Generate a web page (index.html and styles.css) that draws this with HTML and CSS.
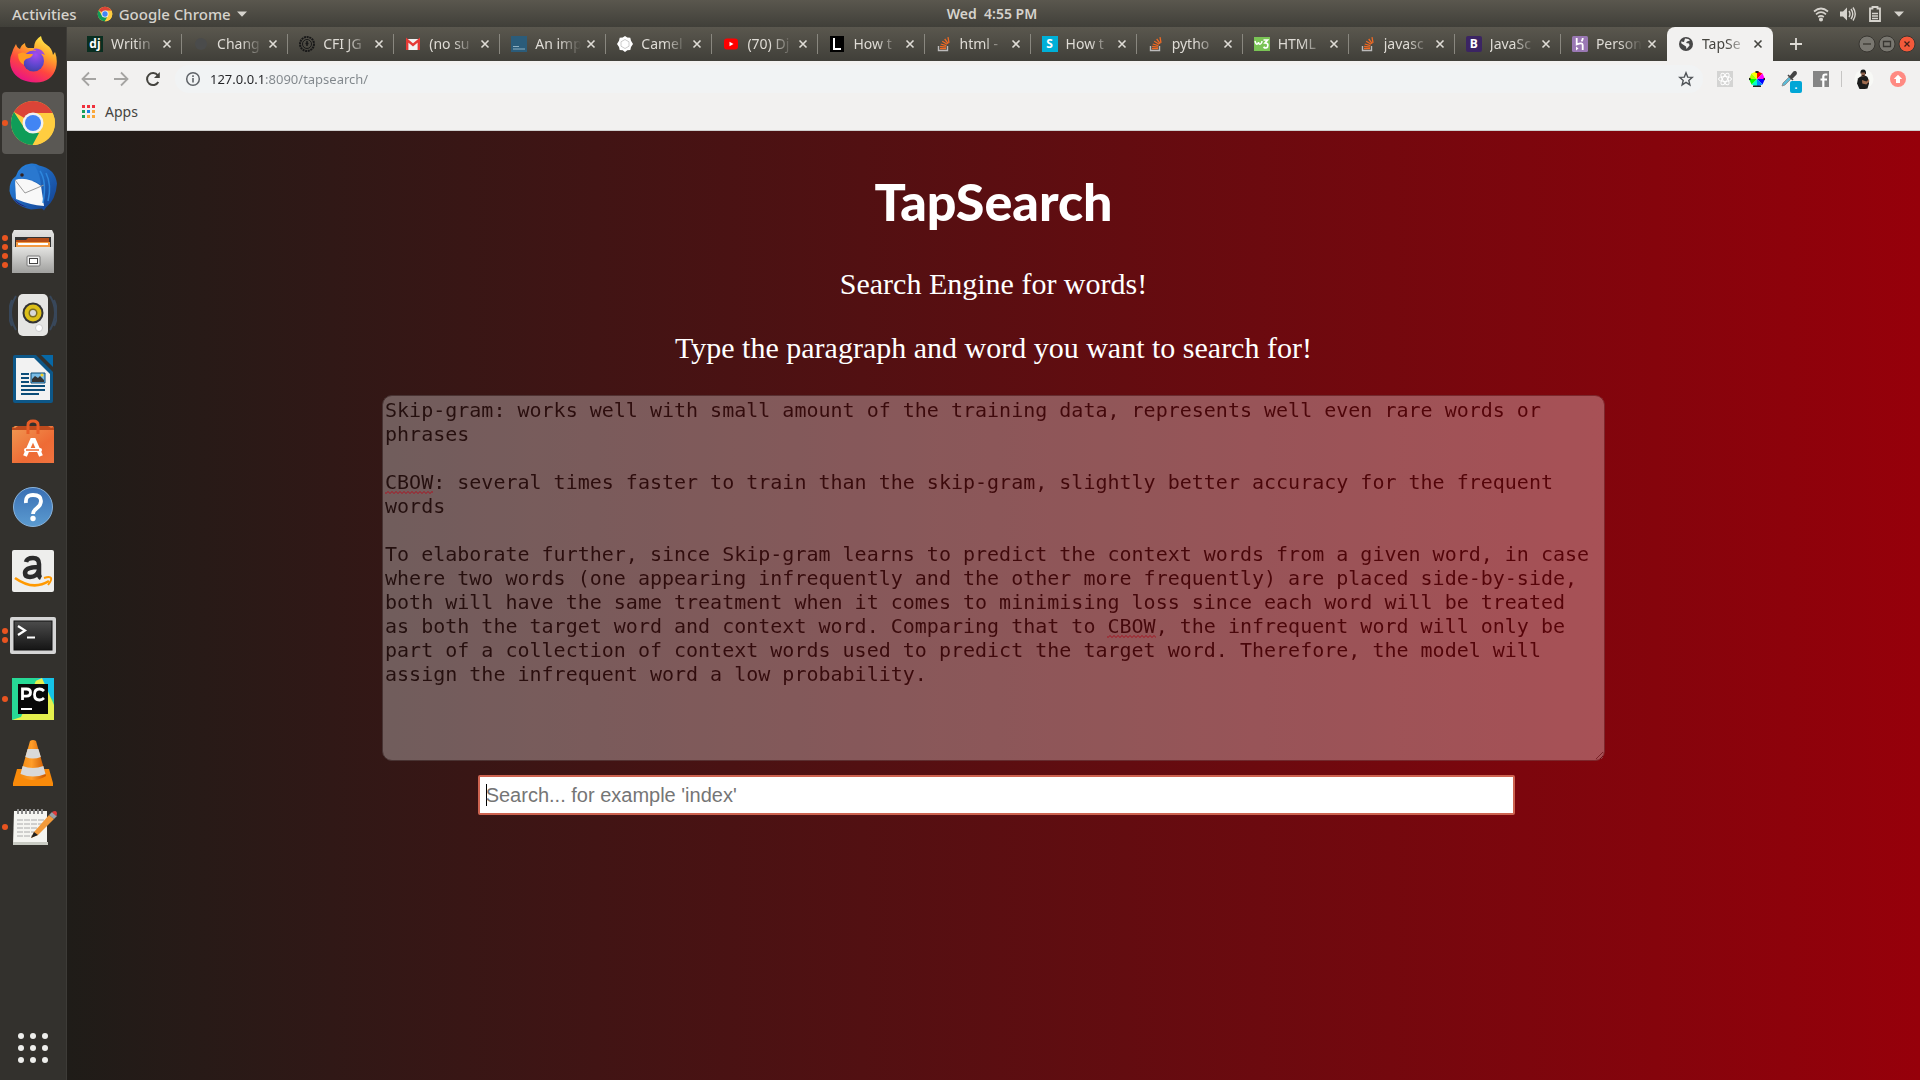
FILE: index.html
```html
<!DOCTYPE html>
<html lang="en">
<head>
<meta charset="utf-8">
<title>TapSearch</title>
<link rel="stylesheet" href="styles.css">
</head>
<body>
<svg class="defs" aria-hidden="true">
  <defs>
    <linearGradient id="ffBody" x1="0.8" y1="0" x2="0.3" y2="1"><stop offset="0" stop-color="#fff44f"/><stop offset=".35" stop-color="#ffa52b"/><stop offset=".65" stop-color="#ff4540"/><stop offset="1" stop-color="#e8108a"/></linearGradient>
    <radialGradient id="ffCore" cx=".6" cy=".2" r=".9"><stop offset="0" stop-color="#a44cf0"/><stop offset=".6" stop-color="#5b46cc"/><stop offset="1" stop-color="#3a3f9c"/></radialGradient>
    <linearGradient id="bird" x1="0" y1="0" x2="1" y2="1"><stop offset="0" stop-color="#2a8be8"/><stop offset="1" stop-color="#123d8c"/></linearGradient>
    <linearGradient id="metal" x1="0" y1="0" x2="0" y2="1"><stop offset="0" stop-color="#e4e4e2"/><stop offset="1" stop-color="#a2a2a0"/></linearGradient>
    <linearGradient id="helpBlue" x1="0" y1="0" x2="0" y2="1"><stop offset="0" stop-color="#3a6fb4"/><stop offset="1" stop-color="#5b9bd0"/></linearGradient>
    <linearGradient id="bag" x1="0" y1="0" x2="1" y2="1"><stop offset="0" stop-color="#f0944f"/><stop offset=".6" stop-color="#ee6b35"/><stop offset="1" stop-color="#f0733f"/></linearGradient>
    <linearGradient id="term" x1="0" y1="0" x2="0" y2="1"><stop offset="0" stop-color="#4c4c4c"/><stop offset="1" stop-color="#151515"/></linearGradient>
    <linearGradient id="cone" x1="0" y1="0" x2="1" y2="0"><stop offset="0" stop-color="#f08a10"/><stop offset=".45" stop-color="#ff9d2a"/><stop offset="1" stop-color="#c85500"/></linearGradient>
    <linearGradient id="pyc" x1="0" y1="0" x2="1" y2="0"><stop offset="0" stop-color="#21d789"/><stop offset="1" stop-color="#2fd6a0"/></linearGradient>
    <symbol id="chrome" viewBox="0 0 48 48">
      <circle cx="24" cy="24" r="22" fill="#ffcd40"/>
      <path d="M24 24 4.95 13A22 22 0 0 1 43.05 13L43.5 14H24Z" fill="#db4437"/>
      <path d="M4.95 13 15.3 29A10 10 0 0 0 24 34h8.6L24 46A22 22 0 0 1 4.95 13Z" fill="#0f9d58"/>
      <path d="M32.7 29 23.5 46A22 22 0 0 0 43.5 14H24Z" fill="#ffcd40"/>
      <circle cx="24" cy="24" r="10.5" fill="#f1f1f1"/><circle cx="24" cy="24" r="8" fill="#4285f4"/>
    </symbol>
    <symbol id="so" viewBox="0 0 16 16"><path d="M2.500 10v4.500h9V10" fill="none" stroke="#bcbbbb" stroke-width="1.400"/><path d="M4 12.700h6M4.100 10.500l6 .6M4.700 8l5.700 1.700M6.200 5.200l5 3M8.700 3l3.500 4.600M12 1.200l1 5.700" stroke="#f06a24" stroke-width="1.300"/></symbol>
    <symbol id="x" viewBox="0 0 10 10"><path d="M1.500 1.500l7 7M8.500 1.500l-7 7" stroke="currentColor" stroke-width="1.600"/></symbol>
  </defs>
</svg>

<header class="topbar">
  <div class="topbar-side">
    <button class="topbar-item">Activities</button>
    <button class="topbar-item app-menu"><svg class="i16"><use href="#chrome"/></svg>Google Chrome<svg class="i10" viewBox="0 0 10 6"><path d="M0 .5h10L5 5.800z" fill="currentColor"/></svg></button>
  </div>
  <button class="topbar-item clock">Wed&nbsp; 4:55 PM</button>
  <div class="topbar-side status">
    <svg class="i16" viewBox="0 0 16 16" fill="none" stroke="currentColor" stroke-width="1.700"><path d="M1 5.500q7-6 14 0M3 8.300q5-4.200 10 0M5.200 11q2.800-2.400 5.600 0"/><circle cx="8" cy="13.500" r="1.200" fill="currentColor"/></svg>
    <svg class="i16" viewBox="0 0 16 16"><path d="M0 5.500h3l4-4v13l-4-4H0z" fill="currentColor"/><path d="M9 5q2 3 0 6M11 3q3.500 5 0 10M13 1.500q4.500 6.500 0 13" fill="none" stroke="currentColor" stroke-width="1.400"/></svg>
    <svg class="i16" viewBox="0 0 16 16"><path d="M3 2.500h2.500V1h5v1.500H13V15H3z" fill="none" stroke="currentColor" stroke-width="1.800"/><path d="M5 7.500h6M5 10h6M5 12.500h6" stroke="currentColor" stroke-width="1.500"/></svg>
    <svg class="i10" viewBox="0 0 10 6"><path d="M0 .5h10L5 5.800z" fill="currentColor"/></svg>
  </div>
</header>

<div class="desktop">
<nav class="dock" aria-label="Dock">
  <button class="dock-item" aria-label="Firefox"><svg viewBox="0 0 48 48"><path d="M3 18Q4 14 7 9q1 4 4 5 1-4 5-6 0 4 3 5h6q0-8 7-12 1 6 6 9 5 3 6 10l2-3q3 8 1 16-4 14-20 14.500Q9 47 3 35-1 26 3 18Z" fill="url(#ffBody)"/><circle cx="24.500" cy="26" r="10.500" fill="url(#ffCore)"/><path d="M9 19q5-3 9 0h6q-1 4-7 5-3 2-2 6Q9 27 9 19Z" fill="#ff9b22"/><path d="M24 14q8-2 12 6-4-2-6-1-3-4-6-5Z" fill="#9b4be0"/></svg></button>
  <button class="dock-item active" aria-label="Google Chrome"><span class="dots"><i></i></span><svg><use href="#chrome"/></svg></button>
  <button class="dock-item" aria-label="Thunderbird"><svg viewBox="0 0 48 48"><path d="M7 13Q10 2 22 .5q5-.5 8 2 16 3 18 18-1 16-11 24l-2 3-2-2-11 1Q3 42 .5 28 0 18 7 13Z" fill="url(#bird)"/><path d="M6 17q12-4 26 6l3 20q-14-1-28-7Z" fill="#f8f8f8"/><path d="M6 17l10 13 19-8" fill="none" stroke="#9a9a9a"/><path d="M10 11q4-9 16-8 5 8 6 19-12-9-24-6Z" fill="#2a78cf"/><path d="M31 8q7 10 3 32M37 10q6 12 2 28" stroke="#2d86dd" fill="none" stroke-width="1.500"/><circle cx="13" cy="12" r="1.800" fill="#322"/><path d="M3 34q6 7 15 10-9-1-15-10Z" fill="#2b1260"/></svg></button>
  <button class="dock-item" aria-label="Files"><span class="dots"><i></i><i></i><i></i><i></i></span><svg viewBox="0 0 48 48"><path d="M5 3h38l2 4v39H3V7Z" fill="url(#metal)"/><path d="M6 10h36v12H6z" fill="#333"/><path d="M7 13h10l2-2h21v10H7z" fill="#b64d16"/><path d="M7 15h34v7H7z" fill="#f39a43"/><path d="M9 16h30v2H9z" fill="#fff"/><path d="M4 20h40v25H4z" fill="url(#metal)"/><rect x="18" y="29" width="13" height="10" rx="1" fill="#eee" stroke="#777"/><rect x="20.500" y="31.500" width="8" height="5" fill="#fff" stroke="#444"/></svg></button>
  <button class="dock-item" aria-label="Rhythmbox"><svg viewBox="0 0 48 48"><path d="M7 5q-10 16 0 34M3 9q-6 14 0 26M41 5q10 16 0 34M45 9q6 14 0 26" fill="none" stroke="#3d5a80" stroke-width="2" opacity=".55"/><rect x="9" y="3" width="30" height="42" rx="5" fill="#e5e5e3"/><circle cx="24" cy="22" r="10.500" fill="#333"/><circle cx="24" cy="22" r="8.500" fill="#dcbf18"/><circle cx="24" cy="22" r="4.500" fill="#7c6d25"/><circle cx="24" cy="22" r="3" fill="#d8d8d8"/><circle cx="30" cy="37" r="3.500" fill="#fff" stroke="#ccc"/></svg></button>
  <button class="dock-item" aria-label="LibreOffice Writer"><svg viewBox="0 0 48 48"><path d="M4 2q0-2 2-2h21l17 17v29q0 2-2 2H6q-2 0-2-2z" fill="#0d5788"/><path d="M32 0h12v12Z" fill="#0768a6"/><path d="M7 3h18l16 16v26H7z" fill="#f2f2f2"/><path d="M12 19h8M12 23h8M12 27h8M12 31h24M12 35h24M12 39h18" stroke="#0b4d79" stroke-width="2"/><path d="M22 18h14v10H22z" fill="#79bce6" stroke="#0b4d79"/><path d="M23 27v-3l3-3 3 2 2-2 4 4v2z" fill="#333"/><circle cx="33" cy="20" r="1.500" fill="#f5d021"/></svg></button>
  <button class="dock-item" aria-label="Ubuntu Software"><svg viewBox="0 0 48 48"><path d="M3 9l3-2 38 0 1 2v35H3z" fill="url(#bag)"/><path d="M3 11V8l3 1 3-2h30l3 2 3-1v3z" fill="#bd4a1d"/><path d="M3 11h42v33H3z" fill="url(#bag)"/><path d="M19 15V6q0-4 5-4t5 4v9" fill="none" stroke="#e85d27" stroke-width="3"/><path d="M16 37l7-16h2l7 16" fill="none" stroke="#fff" stroke-width="4"/><rect x="15" y="29" width="18" height="4" rx="2" fill="#fff"/><path d="M17 31h13" stroke="#ee6b35" stroke-width="1.500"/></svg></button>
  <button class="dock-item" aria-label="Help"><svg viewBox="0 0 48 48"><circle cx="24" cy="24" r="19.500" fill="url(#helpBlue)" stroke="#8ab4dc"/><path d="M17 20q-1-8 7-8 8 0 8 6 0 4-4 7t-4 6" fill="none" stroke="#fff" stroke-width="3.800"/><circle cx="24" cy="35.500" r="2.700" fill="#fff"/></svg></button>
  <button class="dock-item" aria-label="Amazon"><svg viewBox="0 0 48 48"><rect x="3" y="3" width="42" height="42" rx="2" fill="#eeeeec"/><path d="M17 15q1-4 7-4 6 0 6 6v10q0 3 2 4M30 20q-14 0-14 6 0 4 5 4 7 0 9-7" fill="none" stroke="#2b2b2b" stroke-width="4.500"/><path d="M6 31q18 13 34 3" fill="none" stroke="#f90" stroke-width="2.600"/><path d="M35 31q6-2 7 0t-3 7" fill="none" stroke="#f90" stroke-width="2"/></svg></button>
  <button class="dock-item" aria-label="Terminal"><span class="dots"><i></i><i></i></span><svg viewBox="0 0 48 48"><rect x="1" y="6" width="46" height="37" rx="2" fill="#d5d5d5"/><rect x="5" y="10" width="38" height="29" fill="url(#term)" stroke="#111"/><path d="M9 15l7 4.500L9 24M18 26.500h8" fill="none" stroke="#fff" stroke-width="2.200"/></svg></button>
  <button class="dock-item" aria-label="PyCharm"><span class="dots"><i></i></span><svg viewBox="0 0 48 48"><path d="M3 3h42v42H3z" fill="url(#pyc)"/><path d="M24 9l6-6h15v22z" fill="#15c4e8"/><path d="M22 8l11-5 12 27v15H3z" fill="#e5f04d"/><path d="M3 3h25L12 42l-9 3z" fill="#27d996"/><path d="M9 9h30v30H9z" fill="#080808"/><path d="M13.500 25V14h4q4 0 4 3.600t-4 3.600h-4M35 16q-2-2-4.500-2-5 0-5 5.500t5 5.500Q33 25 35 23" fill="none" stroke="#fff" stroke-width="2.800"/><path d="M12 34h11" stroke="#fff" stroke-width="2"/></svg></button>
  <button class="dock-item" aria-label="VLC"><svg viewBox="0 0 48 48"><path d="M8 30h32l4 14v3H4v-3z" fill="#f98a0a"/><path d="M21 2q3-2 6 0l10 35q-13 8-26 0z" fill="url(#cone)"/><path d="M18.600 10h10.800l2.500 8q-8 3-15.600 0zM13.600 27q10 4 20.800 0l2.100 8q-12.500 5-25 0z" fill="#d9d9d9"/></svg></button>
  <button class="dock-item" aria-label="Text Editor"><span class="dots"><i></i></span><svg viewBox="0 0 48 48"><path d="M5 8h33v34H4z" fill="#f5f5f1"/><path d="M4 39h35v3H4z" fill="#c9cbc3"/><path d="M8 17h27M8 21h26M8 25h20M8 29h22M8 33h16" stroke="#aaa" stroke-dasharray="6 1"/><path d="M9 6v5M13 6v5M17 6v5M21 6v5M25 6v5M29 6v5M33 6v5" stroke="#888" stroke-width="2"/><path d="M25 29l15-17 5 4-16 16-7 3z" fill="#f29a3a"/><path d="M40 12l3-3 5 4-3 3z" fill="#9aa0a6"/><path d="M43 9q5-3 5 2l-1 2z" fill="#e23b3b"/><path d="M25 29l4 3-7 3z" fill="#222"/></svg></button>
  <button class="dock-item apps-grid" aria-label="Show Applications"><svg viewBox="0 0 48 48" fill="#eeeeec"><circle cx="12" cy="12" r="3"/><circle cx="24" cy="12" r="3"/><circle cx="36" cy="12" r="3"/><circle cx="12" cy="24" r="3"/><circle cx="24" cy="24" r="3"/><circle cx="36" cy="24" r="3"/><circle cx="12" cy="36" r="3"/><circle cx="24" cy="36" r="3"/><circle cx="36" cy="36" r="3"/></svg></button>
</nav>

<div class="browser">
  <div class="tabstrip">
    <div class="tabs">
      <div class="tab"><span class="fav fav-dj">dj</span><span class="tab-title">Writin</span><button class="close" aria-label="Close"><svg><use href="#x"/></svg></button></div>
      <div class="tab"><svg class="fav" viewBox="0 0 16 16"><circle cx="8" cy="8" r="6" fill="#4a4b4b"/></svg><span class="tab-title">Chang</span><button class="close" aria-label="Close"><svg><use href="#x"/></svg></button></div>
      <div class="tab"><svg class="fav" viewBox="0 0 16 16" fill="none" stroke="#181818"><circle cx="8" cy="8" r="7" stroke-width="2" stroke-dasharray="2 .7"/><circle cx="8" cy="8" r="4.500"/><path d="M8 5v5M6.500 7.500h3" stroke-width="1.500"/></svg><span class="tab-title">CFI JG</span><button class="close" aria-label="Close"><svg><use href="#x"/></svg></button></div>
      <div class="tab"><svg class="fav" viewBox="0 0 16 16"><path d="M1 3h14v11H1z" fill="#f2f2f2"/><path d="M2.200 14V4L8 9l5.800-5v10" fill="none" stroke="#e53935" stroke-width="2.400"/></svg><span class="tab-title">(no su</span><button class="close" aria-label="Close"><svg><use href="#x"/></svg></button></div>
      <div class="tab"><svg class="fav" viewBox="0 0 16 16"><path d="M0 0h16v16H0z" fill="#2b5c7a"/><path d="M2 10.500h6M2 13h12" stroke="#8fb0c2"/></svg><span class="tab-title">An imp</span><button class="close" aria-label="Close"><svg><use href="#x"/></svg></button></div>
      <div class="tab"><svg class="fav" viewBox="0 0 16 16"><path d="M8 0l2.300 1.500 3 .3.700 3L16 8l-2 3-.7 3-3 .3L8 16l-2.300-1.700-3-.3L2 11 0 8l2-3.200.7-3 3-.3z" fill="#fff"/><path d="M8 3.500l4 2.300v4.400l-4 2.300-4-2.300V5.800z" fill="none" stroke="#ccc"/></svg><span class="tab-title">Camel</span><button class="close" aria-label="Close"><svg><use href="#x"/></svg></button></div>
      <div class="tab"><svg class="fav" viewBox="0 0 16 16"><rect x="1" y="2.500" width="14" height="11" rx="3" fill="#f00"/><path d="M6.500 5.700v4.600L10.500 8z" fill="#fff"/></svg><span class="tab-title">(70) Dj</span><button class="close" aria-label="Close"><svg><use href="#x"/></svg></button></div>
      <div class="tab"><svg class="fav" viewBox="0 0 16 16"><path d="M1 0h14v16H1z"/><path d="M5 2v11h7" fill="none" stroke="#fff" stroke-width="2"/></svg><span class="tab-title">How t</span><button class="close" aria-label="Close"><svg><use href="#x"/></svg></button></div>
      <div class="tab"><svg class="fav"><use href="#so"/></svg><span class="tab-title">html -</span><button class="close" aria-label="Close"><svg><use href="#x"/></svg></button></div>
      <div class="tab"><span class="fav fav-s">S</span><span class="tab-title">How t</span><button class="close" aria-label="Close"><svg><use href="#x"/></svg></button></div>
      <div class="tab"><svg class="fav"><use href="#so"/></svg><span class="tab-title">pytho</span><button class="close" aria-label="Close"><svg><use href="#x"/></svg></button></div>
      <div class="tab"><svg class="fav" viewBox="0 0 16 16"><path d="M0 1h16v14H0z" fill="#7ac455"/><path d="M1 5q1 4 2.500 3 1-1 1-2 .5 3 2 2t1.500-3" fill="none" stroke="#fff" stroke-width="1.500"/><path d="M9.500 4h4l-2.500 3q4 0 2.500 4-1.500 2-4 0" fill="none" stroke="#fff" stroke-width="1.700"/></svg><span class="tab-title">HTML</span><button class="close" aria-label="Close"><svg><use href="#x"/></svg></button></div>
      <div class="tab"><svg class="fav"><use href="#so"/></svg><span class="tab-title">javasc</span><button class="close" aria-label="Close"><svg><use href="#x"/></svg></button></div>
      <div class="tab"><span class="fav fav-b">B</span><span class="tab-title">JavaSc</span><button class="close" aria-label="Close"><svg><use href="#x"/></svg></button></div>
      <div class="tab"><svg class="fav" viewBox="0 0 16 16"><rect width="16" height="16" rx="1.500" fill="#9a78b4"/><path d="M4.700 2v6.500q6-2.500 6 .5v5M10.800 2q0 2-1.300 3.300" fill="none" stroke="#fff" stroke-width="1.800"/><path d="M4 10.500L6.500 12.500 4 14.500z" fill="#fff"/></svg><span class="tab-title">Person</span><button class="close" aria-label="Close"><svg><use href="#x"/></svg></button></div>
      <div class="tab current"><svg class="fav" viewBox="0 0 16 16"><circle cx="8" cy="8" r="7" fill="#474747"/><path d="M7 2.500q4 0 5 2l-3 1-1 1.500 3 .5.500 2L8.500 13 8 10.500l-4.500-3L3 5.500l3 .5z" fill="#f2f1f0"/></svg><span class="tab-title">TapSe</span><button class="close" aria-label="Close"><svg><use href="#x"/></svg></button></div>
    </div>
    <button class="new-tab" aria-label="New tab"><svg viewBox="0 0 12 12"><path d="M6 0v12M0 6h12" stroke="currentColor" stroke-width="1.800"/></svg></button>
    <div class="window-buttons">
      <button aria-label="Minimize"><svg viewBox="0 0 18 18"><circle cx="9" cy="9" r="8" fill="#797770" stroke="#383631"/><path d="M5 9h8" stroke="#383631" stroke-width="1.300"/></svg></button>
      <button aria-label="Maximize"><svg viewBox="0 0 18 18"><circle cx="9" cy="9" r="8" fill="#797770" stroke="#383631"/><path d="M5.500 6.500h7v5h-7z" fill="none" stroke="#383631" stroke-width="1.300"/></svg></button>
      <button aria-label="Close window"><svg viewBox="0 0 18 18"><circle cx="9" cy="9" r="8" fill="#f4593a" stroke="#383631"/><path d="M6.500 6.500l5 5M11.500 6.500l-5 5" stroke="#45201a" stroke-width="1.300"/></svg></button>
    </div>
  </div>

  <div class="toolbar">
    <button class="nav-btn off" aria-label="Back"><svg class="i16" viewBox="0 0 16 16"><path d="M15 8H2M8 1.500L1.500 8 8 14.500" fill="none" stroke="currentColor" stroke-width="1.800"/></svg></button>
    <button class="nav-btn off" aria-label="Forward"><svg class="i16" viewBox="0 0 16 16"><path d="M1 8h13M8 1.500L14.500 8 8 14.500" fill="none" stroke="currentColor" stroke-width="1.800"/></svg></button>
    <button class="nav-btn" aria-label="Reload"><svg class="i16" viewBox="0 0 16 16"><path d="M13.300 11A6 6 0 1 1 12.800 4.400" fill="none" stroke="currentColor" stroke-width="2"/><path d="M14.800 1v6H9z" fill="currentColor"/></svg></button>
    <div class="omnibox">
      <svg class="i16" viewBox="0 0 16 16"><circle cx="8" cy="8" r="6.300" fill="none" stroke="#5f6368" stroke-width="1.500"/><path d="M8 7v4.500M8 4.300v1.600" stroke="#5f6368" stroke-width="1.600"/></svg>
      <input class="url" type="text" aria-label="Address" value="127.0.0.1:8090/tapsearch/" spellcheck="false">
      <button class="nav-btn" aria-label="Bookmark this page"><svg class="i16" viewBox="0 0 16 16"><path d="M8 1.800l1.700 4.300 4.600.3-3.500 3 1.100 4.500L8 11.400l-3.900 2.500 1.100-4.500-3.500-3 4.600-.3z" fill="none" stroke="#4f5357" stroke-width="1.400"/></svg></button>
    </div>
    <div class="extensions">
      <svg class="i16" viewBox="0 0 16 16"><path d="M0 0h16v16H0z" fill="#d4d4d3"/><g fill="none" stroke="#fff"><ellipse cx="8" cy="8" rx="6.500" ry="2.500"/><ellipse cx="8" cy="8" rx="6.500" ry="2.500" transform="rotate(60 8 8)"/><ellipse cx="8" cy="8" rx="6.500" ry="2.500" transform="rotate(120 8 8)"/></g></svg>
      <svg class="i16" viewBox="0 0 16 16"><path d="M8 8V0L2.500 2.500z" fill="#ff0"/><path d="M8 8V0l5.500 2.500z" fill="#f00"/><path d="M8 8l5.500-5.500L16 8z" fill="#f0f"/><path d="M8 8h8l-2.500 5.500z" fill="#00f"/><path d="M8 8l5.500 5.500L8 16z" fill="#08f"/><path d="M8 8v8l-5.500-2.500z" fill="#0fc"/><path d="M8 8l-5.500 5.500L0 8z" fill="#0f0"/><path d="M8 8H0l2.500-5.500z" fill="#af0"/><path d="M6.500 0h3v2h-3zM0 7h1.500v2H0zM14.500 7H16v2h-1.500zM4 14.500h8V16H4z" fill="#222"/></svg>
      <span class="ext-badged"><svg class="i16" viewBox="0 0 16 16"><path d="M1 15l1-3 6-6 2 2-6 6z" fill="#5bbbd8" stroke="#888" stroke-width=".8"/><path d="M7 4l5 5M9 6l3.500-4.500q2-1.500 2.500 0t-1 2.500L10.500 7.500z" fill="#444" stroke="#444" stroke-width="1.600"/></svg><span class="ext-badge">.</span></span>
      <svg class="i16" viewBox="0 0 16 16"><path d="M0 0h16v16H0z" fill="#858585"/><path d="M10.300 16V5.500q0-2 2-2h2M7.500 8.500h6.500" fill="none" stroke="#fff" stroke-width="2.200"/></svg>
    </div>
    <span class="divider"></span>
    <svg class="avatar" viewBox="0 0 20 20"><circle cx="10" cy="10" r="9.500" fill="#f8f9f6"/><path d="M4 9.500q1.500-2 4-2.500l3-.2q2.500.5 3 2.200l1 5.500-1.500 5q-4 1-8 .5L3 14.500z" fill="#1c1c1c"/><path d="M6.500 4.500q-.5-4 2.700-4 3.300 0 2.800 4.500z" fill="#171717"/><path d="M7.200 3.500h4v3L9.500 8 7.500 7z" fill="#8d614b"/><path d="M7.500 6h3.200L9.500 8z" fill="#2a201c"/><path d="M8 11l4.500 1.500 2.500-2.500.3 2.500-3 3-4-1z" fill="#a06c50"/></svg>
    <svg class="i16" viewBox="0 0 16 16"><circle cx="8" cy="8" r="8" fill="#ff8a82"/><path d="M8 3.800l4.200 4.200H10v4H6V8H3.800z" fill="#fff"/></svg>
  </div>

  <div class="bookmarks">
    <a class="bookmark" href="#"><svg class="i14" viewBox="0 0 13 13"><path d="M0 0h3v3H0zM5 0h3v3H5zM10 0h3v3h-3z" fill="#f0303c"/><path d="M0 5h3v3H0zM0 10h3v3H0z" fill="#16a05a"/><path d="M5 5h3v3H5z" fill="#1a82e8"/><path d="M10 5h3v3h-3zM5 10h3v3H5zM10 10h3v3h-3z" fill="#fba83a"/></svg>Apps</a>
  </div>

  <main class="page">
    <h1>TapSearch</h1>
    <p>Search Engine for words!</p>
    <p>Type the paragraph and word you want to search for!</p>
    <div class="paragraph-box">
      <textarea aria-label="Paragraph" rows="15" spellcheck="false">Skip-gram: works well with small amount of the training data, represents well even rare words or phrases

CBOW: several times faster to train than the skip-gram, slightly better accuracy for the frequent words

To elaborate further, since Skip-gram learns to predict the context words from a given word, in case where two words (one appearing infrequently and the other more frequently) are placed side-by-side, both will have the same treatment when it comes to minimising loss since each word will be treated as both the target word and context word. Comparing that to CBOW, the infrequent word will only be part of a collection of context words used to predict the target word. Therefore, the model will assign the infrequent word a low probability.</textarea>
      <span class="squiggle first"></span>
      <span class="squiggle second"></span>
    </div>
    <input class="search" type="text" aria-label="Search" placeholder="Search... for example 'index'">
  </main>
</div>
</div>
</body>
</html>
```
FILE: styles.css
```css
* { box-sizing: border-box; }
body {
  margin: 0;
  min-height: 100vh;
  display: flex;
  flex-direction: column;
  font: 14px/20px "Noto Sans", sans-serif;
}
button { border: 0; padding: 0; background: none; color: inherit; font: inherit; }
svg { display: block; flex: none; }
.defs { position: absolute; width: 0; height: 0; }
.i16 { width: 16px; height: 16px; }
.i14 { width: 13px; height: 13px; }
.i10 { width: 10px; height: 6px; }

.topbar {
  height: 27px;
  display: grid;
  grid-template-columns: 1fr auto 1fr;
  align-items: center;
  padding: 0 16px 0 12px;
  background: linear-gradient(#5a574e, #403f39);
  color: #d6d3cd;
  font-size: 15px;
  font-weight: 500;
}
.topbar-side { display: flex; align-items: center; gap: 20px; }
.topbar-item { display: flex; align-items: center; gap: 6px; }
.clock { margin-left: 68px; font-size: 14px; font-weight: 600; }
.status { justify-content: flex-end; gap: 11px; }

.desktop { flex: 1; display: grid; grid-template-columns: 67px minmax(0, 1fr); }
.dock {
  display: flex;
  flex-direction: column;
  gap: 2px;
  padding: 1px 2px;
  background: #33312d;
  border-right: 1px solid #3d3b37;
}
.dock-item {
  position: relative;
  height: 62px;
  flex: none;
  display: grid;
  place-items: center;
  border-radius: 4px;
}
.dock-item > svg { width: 48px; height: 48px; }
.dock-item.active { background: #5a5854; }
.apps-grid { margin-top: auto; }
.dots {
  position: absolute;
  left: 0;
  top: 0;
  bottom: 0;
  display: flex;
  flex-direction: column;
  justify-content: center;
  gap: 3px;
}
.dots i { width: 6px; height: 6px; border-radius: 50%; background: #e95420; }

.browser { display: flex; flex-direction: column; }
.tabstrip {
  height: 34px;
  display: flex;
  align-items: stretch;
  padding: 0 4px 0 9px;
  background: linear-gradient(#5a574e, #403f39);
  color: #dfdcd6;
}
.tabs { display: flex; flex: 0 1 1697px; min-width: 0; }
.tab {
  flex: 1 1 0;
  min-width: 0;
  position: relative;
  display: flex;
  align-items: center;
  padding: 0 10px 0 11px;
}
.tab::after {
  content: "";
  position: absolute;
  right: 0;
  top: 7px;
  height: 20px;
  width: 1px;
  background: #89877f;
}
.tab:nth-last-child(2)::after, .tab.current::after { display: none; }
.tab.current {
  background: #f2f1f0;
  color: #45443f;
  border-radius: 8px 8px 0 0;
}
.fav { width: 16px; height: 16px; flex: none; }
.fav-dj, .fav-s, .fav-b {
  font: bold 12px/16px "Open Sans", sans-serif;
  text-align: center;
  color: #fff;
}
.fav-dj { background: #092e20; }
.fav-s { background: #00b0d8; }
.fav-b { background: #3b2463; border-radius: 2px; }
.tab-title {
  flex: 1;
  min-width: 0;
  margin: 0 3px 0 8px;
  overflow: hidden;
  white-space: nowrap;
  -webkit-mask-image: linear-gradient(to right, #000 24px, transparent 46px);
  mask-image: linear-gradient(to right, #000 24px, transparent 46px);
}
.close svg { width: 10px; height: 10px; }
.new-tab { padding: 0 17px; }
.new-tab svg { width: 12px; height: 12px; }
.window-buttons { margin-left: auto; display: flex; align-items: center; gap: 2px; }
.window-buttons svg { width: 18px; height: 18px; }

.toolbar {
  height: 36px;
  display: flex;
  align-items: center;
  gap: 16px;
  padding: 0 14px;
  background: #f2f1f0;
}
.nav-btn { color: #45443f; }
.nav-btn.off { color: #a5a4a2; }
.omnibox {
  flex: 1;
  height: 28px;
  margin: 0 -2px;
  display: flex;
  align-items: center;
  gap: 9px;
  padding: 0 9px 0 10px;
  border-radius: 14px;
  background: #f1f3f4;
}
.url {
  flex: 1;
  min-width: 0;
  border: 0;
  padding: 0;
  outline: 0;
  font: 13px/20px "Noto Sans", sans-serif;
  color: transparent;
  background: linear-gradient(to right, #222326 56px, #80868b 56px);
  -webkit-background-clip: text;
  background-clip: text;
}
.extensions { display: flex; gap: 16px; }
.ext-badged { position: relative; }
.ext-badge {
  position: absolute;
  left: 9px;
  top: 10px;
  width: 12px;
  height: 12px;
  border-radius: 2px;
  background: #00a6d6;
  color: #fff;
  font: bold 10px/8px "Open Sans", sans-serif;
  text-align: center;
}
.divider { width: 1px; height: 16px; margin: 0 -4px; background: #c6c5c4; }
.avatar { width: 20px; height: 20px; }

.bookmarks {
  height: 34px;
  display: flex;
  align-items: center;
  padding: 0 15px 4px;
  background: #f2f1f0;
  border-bottom: 1px solid #cfcecd;
}
.bookmark { display: flex; align-items: center; gap: 10px; color: #45443f; text-decoration: none; }

.page {
  flex: 1;
  display: flex;
  flex-direction: column;
  align-items: center;
  padding: 38px 0;
  background: linear-gradient(to right, #1f1c18, #96000a);
  color: #fff;
  font: 30px/34px "Liberation Serif", serif;
  text-align: center;
}
.page h1 { margin: 0 0 34px; font: 900 52px/64px Lato, sans-serif; }
.page p { margin: 0 0 30px; }
.paragraph-box {
  position: relative;
  width: 66%;
  font: 20px/24px "DejaVu Sans Mono", monospace;
}
.paragraph-box textarea {
  display: block;
  width: 100%;
  margin: 0;
  padding: 2px 8px 2px 2px;
  border: 1px solid #767676;
  border-radius: 10px;
  background: #fff;
  color: #000;
  font: inherit;
  opacity: 0.3;
}
.squiggle {
  position: absolute;
  width: 4ch;
  height: 3px;
  background:
    linear-gradient(135deg, transparent 40%, #a3202c 40% 65%, transparent 65%) 0 0 / 4px 3px,
    linear-gradient(45deg, transparent 40%, #a3202c 40% 65%, transparent 65%) 2px 0 / 4px 3px;
  opacity: 0.6;
}
.squiggle.first { left: 3px; top: 96px; }
.squiggle.second { left: calc(60ch + 3px); top: 240px; }
.search {
  width: 56%;
  height: 40px;
  margin: 14px 0 0 6px;
  padding: 1px 6px;
  border: 2px solid #cd6350;
  border-radius: 2px;
  outline: 0;
  font: 20px/24px "Liberation Sans", sans-serif;
  background: linear-gradient(#000, #000) 6px 7px / 1px 22px no-repeat #fff;
}
.search::placeholder { color: #757575; opacity: 1; }
```
